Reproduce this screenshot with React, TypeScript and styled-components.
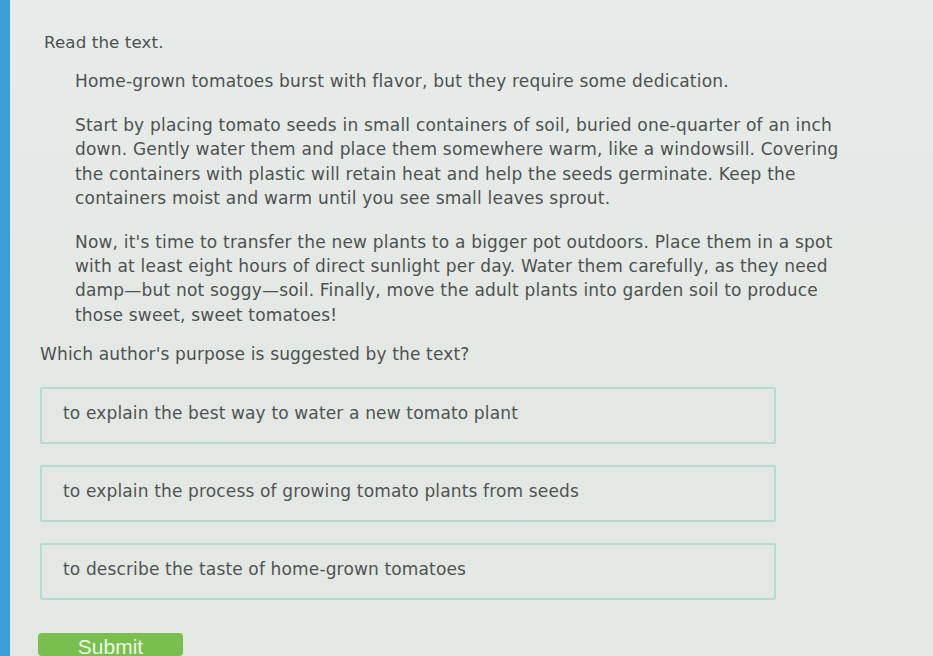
import React from "react";
import styled, { createGlobalStyle } from "styled-components";

const Global = createGlobalStyle`
  html, body { margin: 0; padding: 0; }
  body {
    width: 933px;
    height: 656px;
    overflow: hidden;
    background: #e5eae7;
    font-family: "DejaVu Sans", Verdana, sans-serif;
  }
`;

const Page = styled.div`
  display: flex;
  width: 933px;
  height: 656px;
  overflow: hidden;
  background: linear-gradient(180deg, #e7ecea 0%, #e3e8e5 55%, #e4e8e3 100%);
`;

const SideStrip = styled.div`
  width: 10px;
  flex: none;
  background: #3a9fd6;
`;

const Content = styled.main`
  flex: 1;
  display: flex;
  flex-direction: column;
  padding: 31px 0 0 30px;
  color: #4d5150;
  font-size: 17px;
  letter-spacing: 0.15px;
`;

const Instruction = styled.div`
  margin-left: 4px;
  line-height: 22px;
  letter-spacing: 0.1px;
  font-size: 16.7px;
`;

const Passage = styled.div`
  display: flex;
  flex-direction: column;
  gap: 20px;
  margin: 16px 0 0 35px;
  width: 782px;
`;

const Para = styled.p`
  margin: 0;
  line-height: 24.2px;
  font-size: 17px;
  letter-spacing: 0.2px;
`;

const Question = styled.div`
  margin-top: 16px;
  line-height: 22px;
`;

const Options = styled.div`
  display: flex;
  flex-direction: column;
  gap: 21px;
  margin-top: 22px;
  width: 736px;
`;

const Option = styled.div`
  height: 57px;
  box-sizing: border-box;
  border: 2px solid #b3dcd4;
  border-radius: 2px;
  display: flex;
  align-items: center;
  padding: 0 0 5px 21px;
  color: #4f5353;
`;

const SubmitButton = styled.button`
  margin-top: 33px;
  margin-left: -2px;
  width: 145px;
  height: 40px;
  border: none;
  border-radius: 4px;
  background: #79bf4e;
  color: #eef7e6;
  font-family: "Liberation Sans", Arial, sans-serif;
  font-size: 21px;
  line-height: 18px;
  display: flex;
  justify-content: center;
  align-items: flex-start;
  padding: 5px 0 0 0;
  letter-spacing: 0;
`;

const options = [
  "to explain the best way to water a new tomato plant",
  "to explain the process of growing tomato plants from seeds",
  "to describe the taste of home-grown tomatoes",
];

export default function App() {
  return (
    <>
      <Global />
      <Page>
        <SideStrip />
        <Content>
          <Instruction>Read the text.</Instruction>
          <Passage>
            <Para>Home-grown tomatoes burst with flavor, but they require some dedication.</Para>
            <Para>
              Start by placing tomato seeds in small containers of soil, buried one-quarter of an inch down. Gently water them and place them somewhere warm, like a windowsill. Covering the containers with plastic will retain heat and help the seeds germinate. Keep the containers moist and warm until you see small leaves sprout.
            </Para>
            <Para>
              Now, it's time to transfer the new plants to a bigger pot outdoors. Place them in a spot with at least eight hours of direct sunlight per day. Water them carefully, as they need damp—but not soggy—soil. Finally, move the adult plants into garden soil to produce those sweet, sweet tomatoes!
            </Para>
          </Passage>
          <Question>Which author's purpose is suggested by the text?</Question>
          <Options>
            {options.map((o) => (
              <Option key={o}>{o}</Option>
            ))}
          </Options>
          <SubmitButton>Submit</SubmitButton>
        </Content>
      </Page>
    </>
  );
}
